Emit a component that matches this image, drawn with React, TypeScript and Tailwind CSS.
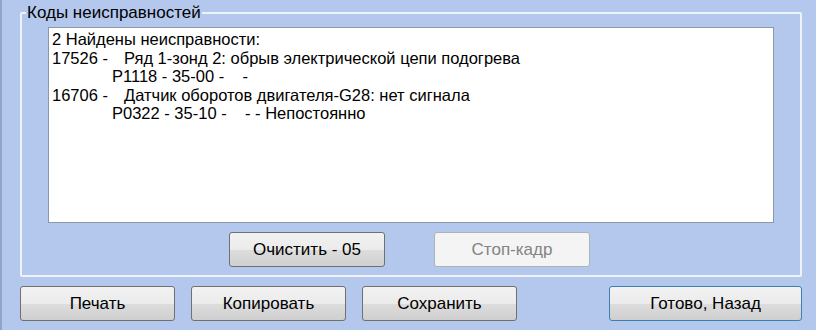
import React from "react";

const FAULTS = [
  {
    code: "17526 -",
    text: "Ряд 1-зонд 2: обрыв электрической цепи подогрева",
    detail: "P1118 - 35-00 -    -",
  },
  {
    code: "16706 -",
    text: "Датчик оборотов двигателя-G28: нет сигнала",
    detail: "P0322 - 35-10 -    - - Непостоянно",
  },
];

const btnBase =
  "h-[35px] rounded-[3px] border text-[17px] leading-none flex items-center justify-center";
const btnNormal =
  "border-[#707070] text-black bg-[linear-gradient(to_bottom,#f2f2f2_0%,#ebebeb_50%,#dddddd_51%,#cfcfcf_100%)]";
const btnDefault =
  "border-[#3c7fb1] text-black bg-[linear-gradient(to_bottom,#f2f2f2_0%,#ebebeb_50%,#dddddd_51%,#cfcfcf_100%)]";
const btnDisabled = "border-[#adb2b5] text-[#838383] bg-[#f4f4f4]";

const WinButton = ({
  label,
  width,
  disabled = false,
  isDefault = false,
}: {
  label: string;
  width: string;
  disabled?: boolean;
  isDefault?: boolean;
}) => {
  const cls = disabled ? btnDisabled : isDefault ? btnDefault : btnNormal;
  return <div className={`${btnBase} ${cls} ${width}`}>{label}</div>;
};

const App = () => {
  return (
    <div
      className="w-[816px] h-[330px] bg-[#b4c8ee] border-l-[2px] border-l-[#8ea4cc] pl-[18px] pt-[4px] overflow-hidden"
      style={{ fontFamily: '"Liberation Sans", Arial, sans-serif' }}
    >
      <fieldset className="w-[782px] border-2 border-[#eef2fb] rounded-[2px] pl-[26px] pr-[26px] pb-[8px] pt-[5px]">
        <legend className="-ml-[22px] px-[1px] text-[17px] leading-[18px] text-black">
          Коды неисправностей
        </legend>
        <div className="h-[196px] bg-white border border-[#8c97a8] pl-[3px] pt-[2px] text-[16.5px] leading-[18.6px] text-black whitespace-pre">
          <div>2 Найдены неисправности:</div>
          {FAULTS.map((f) => (
            <div key={f.code}>
              <div className="flex">
                <span className="w-[72px]">{f.code}</span>
                <span>{f.text}</span>
              </div>
              <div className="pl-[60px]">{f.detail}</div>
            </div>
          ))}
        </div>
        <div className="flex gap-[49px] ml-[181px] mt-[9px]">
          <WinButton label="Очистить - 05" width="w-[156px]" />
          <WinButton label="Стоп-кадр" width="w-[156px]" disabled />
        </div>
      </fieldset>
      <div className="flex mt-[9px]">
        <div className="flex gap-[16px]">
          <WinButton label="Печать" width="w-[155px]" />
          <WinButton label="Копировать" width="w-[155px]" />
          <WinButton label="Сохранить" width="w-[155px]" />
        </div>
        <div className="ml-[92px]">
          <WinButton label="Готово, Назад" width="w-[193px]" isDefault />
        </div>
      </div>
    </div>
  );
};

export default App;
